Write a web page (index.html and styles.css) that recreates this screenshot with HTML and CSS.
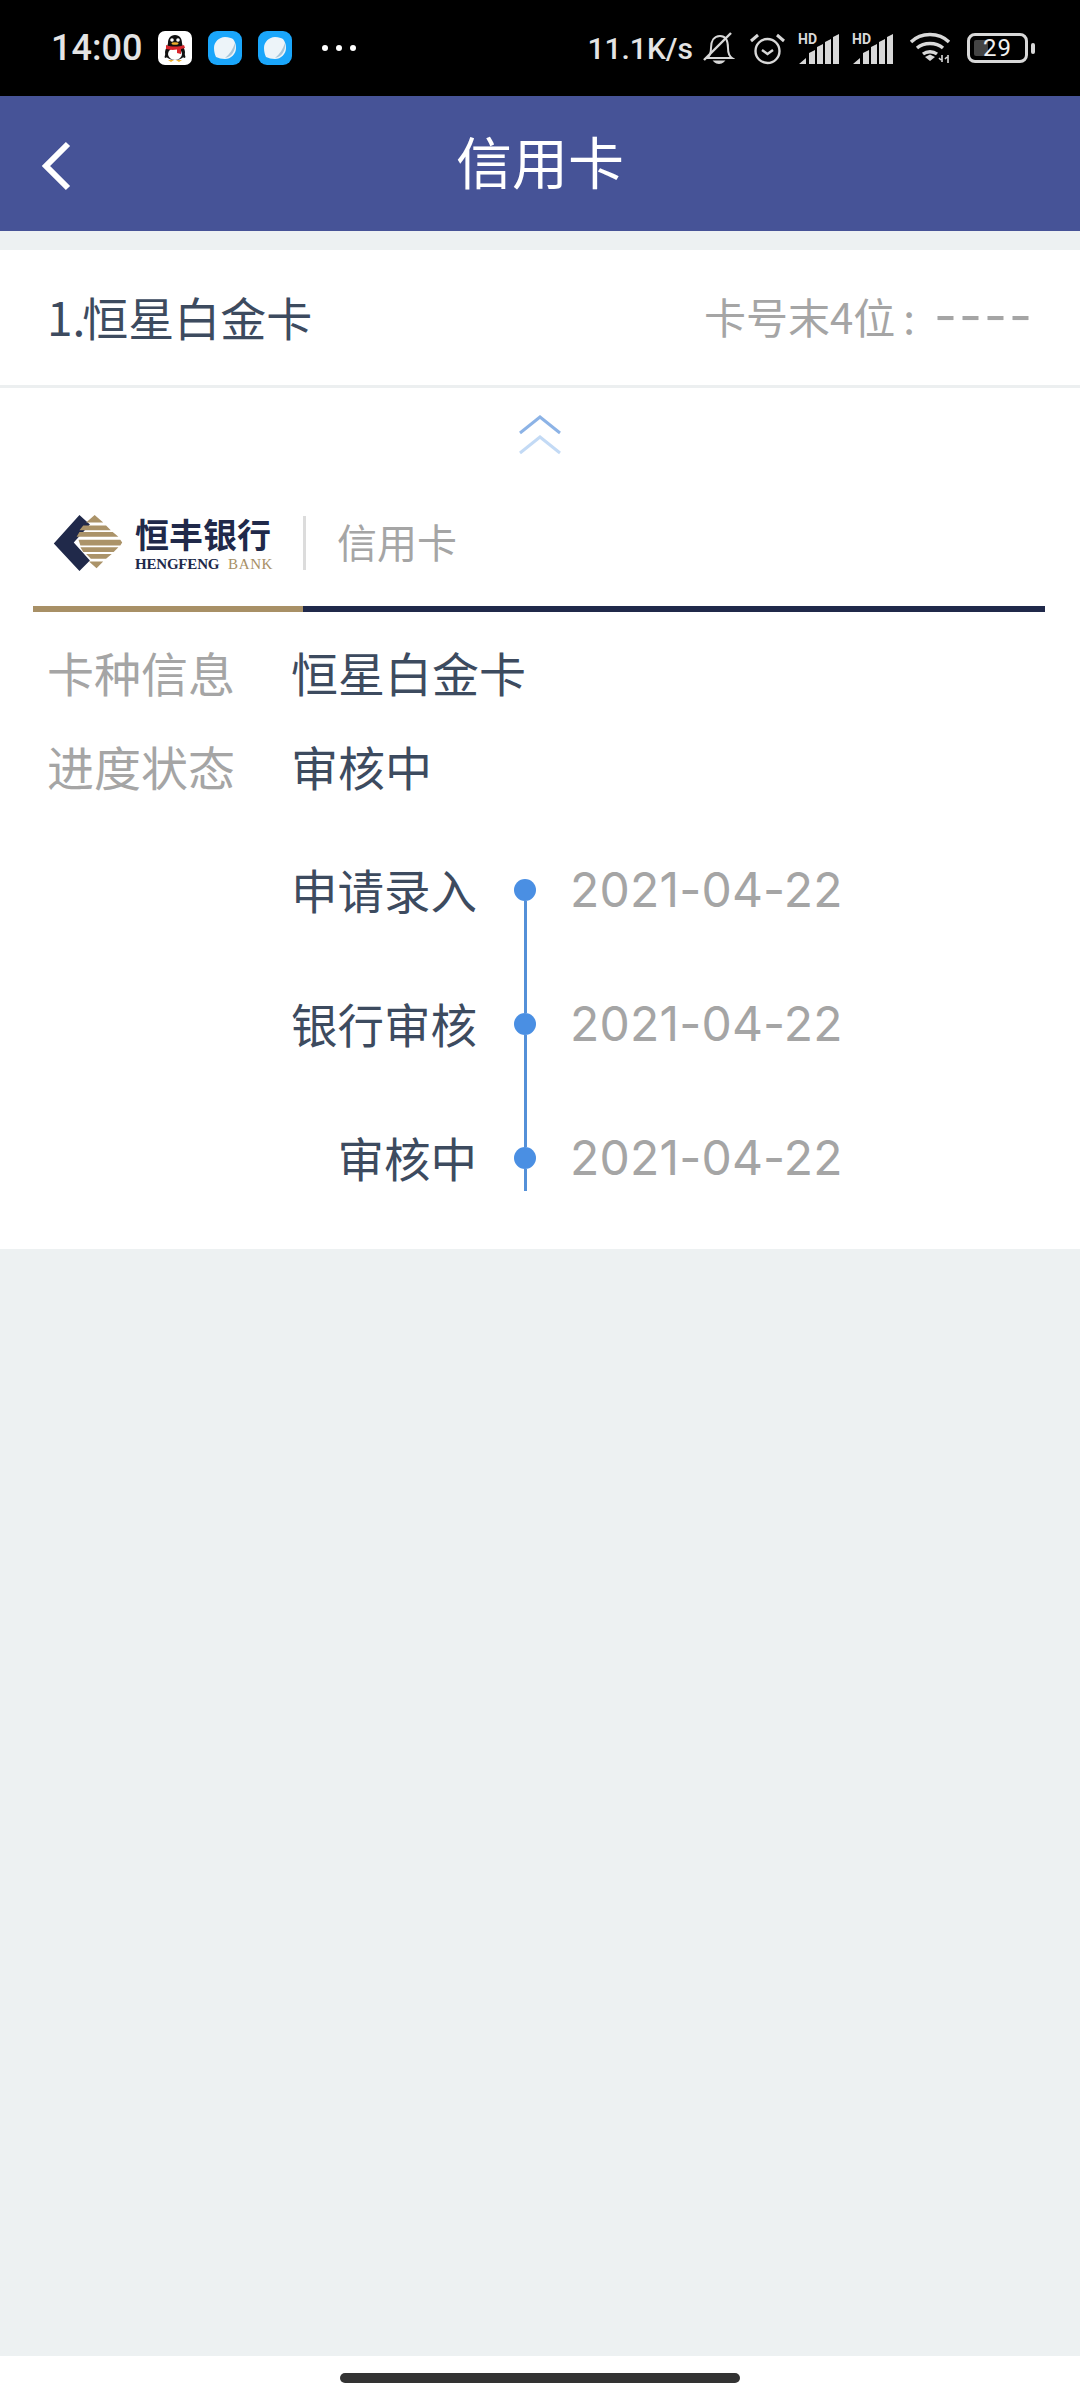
FILE: index.html
```html
<!DOCTYPE html>
<html lang="zh-CN">

<head>
  <meta charset="UTF-8">
  <meta name="viewport" content="width=device-width, initial-scale=1.0">
  <title>信用卡</title>
  <link rel="stylesheet" href="styles.css">
</head>

<body>
  <div class="status-bar">
    <span class="clock">14:00</span>
    <svg class="app-icon" viewBox="0 0 34 34">
      <rect width="34" height="34" rx="7" fill="#fff"/>
      <path d="M8 22c-1 2-2 4-1 5l3-1zM26 22c1 2 2 4 1 5l-3-1z" fill="#111"/>
      <path d="M17 4c5 0 7 4 7 8 0 3 3 6 3 9 0 5-4 8-10 8s-10-3-10-8c0-3 3-6 3-9 0-4 2-8 7-8z" fill="#111"/>
      <ellipse cx="17" cy="23" rx="7" ry="6" fill="#fff"/>
      <path d="M8 14c5 2 13 2 18 0l1 3-4 1v5l-4-1v-3.500c-3 .5-6 .5-8 0L8 18z" fill="#d9262c"/>
      <circle cx="14" cy="9" r="1.800" fill="#fff"/>
      <circle cx="20" cy="9" r="1.800" fill="#fff"/>
      <ellipse cx="17" cy="12.500" rx="3.500" ry="1.300" fill="#eeb02c"/>
      <path d="M10 29h6l-3 2zM18 29h6l-3 2z" fill="#eeb02c"/>
    </svg>
    <svg class="app-icon" viewBox="0 0 34 34">
      <rect width="34" height="34" rx="9" fill="#1aa6fb"/>
      <path d="M17 6c4 0 6 1 8 2 2 3 3 5 3 9 0 6-5 11-11 11-4 0-6-1-9-2-1-2-2-5-2-9C6 11 11 6 17 6z" fill="#edf4f9"/>
      <path d="M27 12c1 7-3 14-10 15 5-4 8-9 10-15z" fill="#a9c6d8"/>
    </svg>
    <svg class="app-icon" viewBox="0 0 34 34">
      <rect width="34" height="34" rx="9" fill="#1aa6fb"/>
      <path d="M17 6c4 0 6 1 8 2 2 3 3 5 3 9 0 6-5 11-11 11-4 0-6-1-9-2-1-2-2-5-2-9C6 11 11 6 17 6z" fill="#edf4f9"/>
      <path d="M27 12c1 7-3 14-10 15 5-4 8-9 10-15z" fill="#a9c6d8"/>
    </svg>
    <div class="more-dots"><i></i><i></i><i></i></div>

    <div class="status-right">
      <span class="speed">11.1K/s</span>
      <svg class="st-bell" viewBox="0 0 32 32" fill="none" stroke="#d8d8d8" stroke-width="2">
        <path d="M4 26c3-2 4-5 4-10 0-7 3-12 9-12s8 5 8 12c0 4 1 8 4 10z"/>
        <path d="M12 29.500c2 2 6 2 8 0z" fill="#d8d8d8"/>
        <path d="M1 28L28 1" stroke-width="2.400"/>
      </svg>
      <svg class="st-alarm" viewBox="0 0 35 33" fill="none" stroke="#d8d8d8" stroke-width="2.400">
        <circle cx="17.500" cy="19" r="12"/>
        <path d="M12 18l5.500 4 5.500-4"/>
        <path d="M1 9l7-6M34 9l-7-6" stroke-width="3"/>
      </svg>
      <svg class="st-signal" viewBox="0 0 41 31" fill="#d8d8d8">
        <text x="0" y="11" class="hd-text">HD</text>
        <path d="M1 31l7-6v6zM11 20l6-3v14h-6zM19 14l6-3v20h-6zM27 9l6-3v25h-6zM35 4l6-3v30h-6z"/>
      </svg>
      <svg class="st-signal" viewBox="0 0 41 31" fill="#d8d8d8">
        <text x="0" y="11" class="hd-text">HD</text>
        <path d="M1 31l7-6v6zM11 20l6-3v14h-6zM19 14l6-3v20h-6zM27 9l6-3v25h-6zM35 4l6-3v30h-6z"/>
      </svg>
      <svg class="st-wifi" viewBox="0 0 42 32" fill="none" stroke="#d8d8d8" stroke-width="3.400">
        <path d="M2 10C12 0 30 0 40 10"/>
        <path d="M8 16c7-6 19-6 26 0"/>
        <path d="M14 22c4-3 10-3 14 0"/>
        <path d="M16 25l5-2.500 5 2.500-5 4z" fill="#d8d8d8" stroke="none"/>
        <path d="M33 23v7M32 28l-2-2M39 31v-8M38 25l-2 2" stroke-width="1.600"/>
      </svg>
      <div class="battery">
        <div class="battery-body"><i class="battery-fill"></i><span>29</span></div>
        <i class="battery-cap"></i>
      </div>
    </div>
  </div>

  <header class="top-bar">
    <a class="back-btn" href="#">
      <svg viewBox="0 0 34 50" fill="none" stroke="#fff" stroke-width="6">
        <path d="M29 3L7 25l22 22"/>
      </svg>
    </a>
    <h1>信用卡</h1>
  </header>

  <main class="page">
    <section class="card-head">
      <span class="card-name"><span class="card-no">1.</span>恒星白金卡</span>
      <span class="card-tail">卡号末4位<span class="tail-colon">:</span><span class="tail-dash">----</span></span>
    </section>

    <section class="detail">
      <div class="fold">
        <svg viewBox="0 0 44 40" fill="none" stroke-width="3">
          <path d="M2 18L22 2l20 16" stroke="#8cb3e6"/>
          <path d="M2 38l20-16 20 16" stroke="#c3daf5"/>
        </svg>
      </div>

      <div class="bank-row">
        <svg class="bank-mark" viewBox="0 0 72 60">
          <path d="M27 0L38 10 21 29l17 19-11 11L0 30z" fill="#20294a"/>
          <path d="M43 0l9 8H34zM31 11h24l5 5H27zM27 18h35l6 5H24zM26 26h44l2 3-2 3H28zM28 34h40l-5 5H31zM34 41h27l-6 5H39l-5-5zM37 49h15l-7 7z" fill="#ab9369"/>
        </svg>
        <div class="bank-name">
          <strong>恒丰银行</strong>
          <span class="bank-en">HENGFENG<em>BANK</em></span>
        </div>
        <span class="bank-type">信用卡</span>
      </div>
      <div class="split-line"><i></i></div>

      <dl class="info">
        <div class="info-row">
          <dt>卡种信息</dt>
          <dd>恒星白金卡</dd>
        </div>
        <div class="info-row">
          <dt>进度状态</dt>
          <dd>审核中</dd>
        </div>
      </dl>

      <ul class="timeline">
        <li>
          <span class="step">申请录入</span>
          <span class="axis"><i class="dot"></i><i class="rail"></i></span>
          <span class="date">2021-04-22</span>
        </li>
        <li>
          <span class="step">银行审核</span>
          <span class="axis"><i class="dot"></i><i class="rail"></i></span>
          <span class="date">2021-04-22</span>
        </li>
        <li>
          <span class="step">审核中</span>
          <span class="axis"><i class="dot"></i><i class="rail"></i></span>
          <span class="date">2021-04-22</span>
        </li>
      </ul>
    </section>
  </main>

  <div class="nav-bar"><i></i></div>
</body>

</html>
```

FILE: styles.css
```css
*{margin: 0; padding: 0; box-sizing: border-box;}
a{text-decoration: 0;}
ul{list-style: none;}
i{display: block;}
body{
  width: 1080px;
  height: 2400px;
  display: flex;
  flex-direction: column;
  background-color: #edf1f2;
  font-family: "Noto Sans CJK SC", "Noto Sans", sans-serif;
}

/*status bar*/
.status-bar{
  height: 96px;
  flex: none;
  padding: 0 45px 0 51px;
  display: flex;
  align-items: center;
  background-color: #000;
  color: #e4e4e4;
}
.clock{
  width: 107px;
  font-family: "Roboto", sans-serif;
  font-size: 36px;
  font-weight: 500;
}
.app-icon{
  width: 34px;
  height: 34px;
  margin-right: 16px;
}
.more-dots{
  display: flex;
  gap: 8px;
  margin-left: 14px;
}
.more-dots i{
  width: 6px;
  height: 6px;
  border-radius: 50%;
  background-color: #fff;
}
.status-right{
  margin-left: auto;
  display: flex;
  align-items: center;
}
.speed{
  font-family: "Roboto", sans-serif;
  font-size: 30px;
  font-weight: 500;
  margin-right: 10px;
}
.st-bell{width: 32px; height: 32px; margin-right: 15px;}
.st-alarm{width: 35px; height: 33px; margin-right: 13px;}
.st-signal{width: 41px; height: 31px; margin-right: 13px; overflow: visible;}
.st-signal + .st-wifi{margin-left: 3px;}
.st-wifi{width: 42px; height: 32px; margin-right: 16px;}
.hd-text{
  font-family: "Roboto", sans-serif;
  font-size: 14px;
  font-weight: 700;
}
.battery{
  display: flex;
  align-items: center;
  gap: 3px;
}
.battery-body{
  width: 61px;
  height: 30px;
  border: 3px solid #d8d8d8;
  border-radius: 8px;
  position: relative;
  display: flex;
  align-items: center;
  justify-content: center;
  font-family: "Roboto", sans-serif;
  font-size: 24px;
  color: #f0f0f0;
  letter-spacing: 1px;
}
.battery-body span{position: relative;}
.battery-fill{
  position: absolute;
  left: 4px;
  top: 4px;
  bottom: 4px;
  width: 14px;
  border-radius: 2px;
  background-color: #444;
}
.battery-cap{
  width: 4px;
  height: 11px;
  border-radius: 2px;
  background-color: #d8d8d8;
}

/*header*/
.top-bar{
  height: 135px;
  flex: none;
  padding-bottom: 9px;
  display: flex;
  align-items: center;
  justify-content: center;
  position: relative;
  background-color: #465397;
}
.top-bar h1{
  font-size: 56px;
  font-weight: 400;
  color: #fff;
}
.back-btn{
  position: absolute;
  left: 39px;
  top: 45px;
  width: 34px;
  height: 50px;
}
.back-btn svg{
  display: block;
  width: 100%;
  height: 100%;
}

/*content*/
.page{
  flex: 1;
  padding-top: 19px;
}
.card-head{
  height: 138px;
  padding: 0 48px 4px 47px;
  display: flex;
  align-items: center;
  justify-content: space-between;
  background-color: #fff;
  border-bottom: 3px solid #eceff0;
}
.card-name{
  font-size: 46px;
  color: #3d4b5f;
}
.card-no{
  margin-right: -3px;
}
.card-tail{
  display: flex;
  align-items: center;
  white-space: nowrap;
  font-size: 42px;
  color: #a5a5a5;
}
.tail-colon{
  margin: 0 19px 0 8px;
}
.tail-dash{
  font-family: "Inter", sans-serif;
  font-size: 50px;
  line-height: 50px;
  letter-spacing: 2px;
  margin-right: -2px;
}

.detail{
  height: 861px;
  padding: 0 35px 0 33px;
  background-color: #fff;
}
.fold{
  padding-top: 27px;
  display: flex;
  justify-content: center;
  margin-left: 1px;
}
.fold svg{
  display: block;
  width: 44px;
  height: 40px;
}

/*bank logo*/
.bank-row{
  height: 64px;
  margin-top: 56px;
  padding-left: 20px;
  display: flex;
  align-items: center;
}
.bank-mark{
  width: 70px;
  height: 57px;
  margin-right: 12px;
}
.bank-name{
  display: flex;
  flex-direction: column;
  width: 138px;
}
.bank-name strong{
  font-size: 34px;
  line-height: 42px;
  font-weight: 700;
  color: #20294a;
}
.bank-en{
  display: flex;
  justify-content: space-between;
  font-family: "Liberation Serif", serif;
  font-size: 15px;
  font-weight: 700;
  line-height: 18px;
  color: #20294a;
  letter-spacing: -0.2px;
}
.bank-en em{
  font-style: normal;
  font-weight: 400;
  color: #a89066;
  letter-spacing: 0.6px;
}
.bank-type{
  margin-left: 30px;
  padding-left: 31px;
  height: 54px;
  line-height: 50px;
  border-left: 3px solid #dcdcdc;
  font-size: 40px;
  color: #a5a5a5;
}
.split-line{
  height: 6px;
  margin-top: 31px;
  background-color: #20294a;
}
.split-line i{
  width: 270px;
  height: 100%;
  background-color: #a89066;
}

/*card info*/
.info{
  margin-top: 27px;
  padding-left: 14px;
  display: flex;
  flex-direction: column;
  gap: 29px;
}
.info-row{
  height: 65px;
  display: flex;
  align-items: center;
  font-size: 47px;
}
.info-row dt{
  width: 244px;
  color: #a5a5a5;
}
.info-row dd{
  color: #3d4b5f;
}

/*progress*/
.timeline{
  margin-top: 81px;
}
.timeline li{
  height: 134px;
  display: flex;
  align-items: flex-start;
}
.timeline li:last-child{
  height: 44px;
}
.step{
  width: 444px;
  height: 20px;
  line-height: 20px;
  text-align: right;
  font-size: 46.500px;
  color: #3d4b5f;
}
.axis{
  width: 20px;
  height: 100%;
  margin-left: 38px;
  display: flex;
  flex-direction: column;
  align-items: center;
}
.dot{
  width: 22px;
  height: 22px;
  flex: none;
  border-radius: 50%;
  background-color: #4a8fe3;
}
.rail{
  width: 3px;
  flex: 1;
  background-color: #5490d8;
}
.date{
  height: 22px;
  line-height: 22px;
  margin-left: 35px;
  font-family: "Inter", sans-serif;
  font-size: 48px;
  letter-spacing: 0.2px;
  color: #a5a5a5;
}

/*navigation bar*/
.nav-bar{
  height: 44px;
  flex: none;
  display: flex;
  align-items: center;
  justify-content: center;
  background-color: #fff;
}
.nav-bar i{
  width: 400px;
  height: 10px;
  border-radius: 5px;
  background-color: #333;
}
```
